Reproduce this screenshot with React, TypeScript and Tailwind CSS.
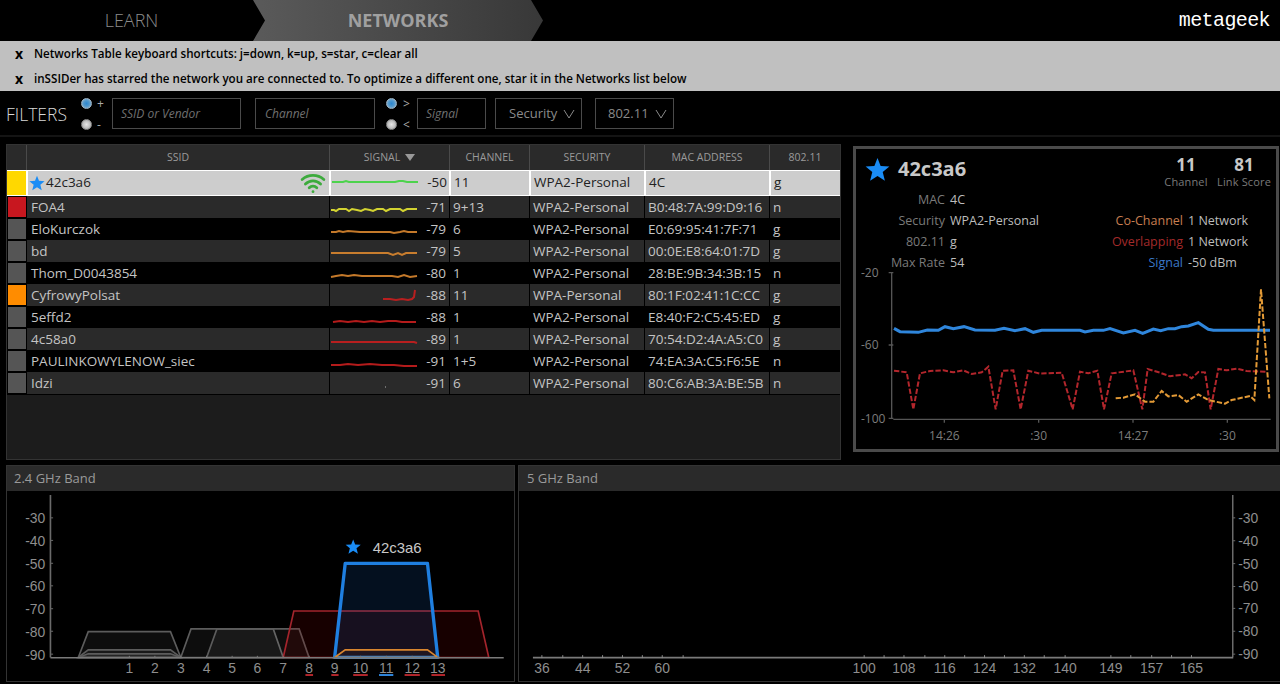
import React from "react";
import { Wifi } from "lucide-react";

const ui = "font-['Open_Sans','Noto_Sans',sans-serif]";

function Star({ size, className }: { size: number; className?: string }) {
  return (
    <svg width={size} height={size} viewBox="0 0 24 24" className={className}>
      <polygon points="12,1 15,8.6 23.4,9.2 17,14.5 19.1,22.8 12,18.2 4.9,22.8 7,14.5 0.6,9.2 9,8.6" fill="#1a8cf5" />
    </svg>
  );
}

function Radio({ on }: { on?: boolean }) {
  return (
    <span
      className={
        on
          ? "block w-[11px] h-[11px] shrink-0 rounded-full border border-[#9fb4c4] bg-[radial-gradient(circle,#2a86d0_0%,#4f97cc_45%,#a8bccb_100%)]"
          : "block w-[11px] h-[11px] shrink-0 rounded-full border border-[#8a8a8a] bg-[radial-gradient(circle,#e8e8e8_0%,#bdbdbd_60%,#8f8f8f_100%)]"
      }
    />
  );
}

function Chevron() {
  return (
    <svg width="12" height="10" viewBox="0 0 12 10" className="ml-[6px]">
      <polyline points="1,1 6,9 11,1" fill="none" stroke="#8a8a8a" strokeWidth="1" />
    </svg>
  );
}

const rows = [
  { color: "bg-[#c8171f]", ssid: "FOA4", sig: -71, ch: "9+13", sec: "WPA2-Personal", mac: "B0:48:7A:99:D9:16", std: "n", line: "#e6e632", pts: "1,14 4,14 6,15 9,13 16,13 19,15 22,13 27,14 31,15 35,13 40,14 43,15 47,13 53,13 56,15 60,13 70,13 73,15 77,13 87,13" },
  { color: "bg-[#555]", ssid: "EloKurczok", sig: -79, ch: "6", sec: "WPA2-Personal", mac: "E0:69:95:41:7F:71", std: "g", line: "#d9862f", pts: "1,14 6,14 9,13 13,14 18,13 30,14 60,14 64,15 70,14 74,13 78,14 87,14" },
  { color: "bg-[#555]", ssid: "bd", sig: -79, ch: "5", sec: "WPA2-Personal", mac: "00:0E:E8:64:01:7D", std: "g", line: "#d9862f", pts: "1,13 58,13 63,15 68,13 72,15 76,13 87,13" },
  { color: "bg-[#555]", ssid: "Thom_D0043854", sig: -80, ch: "1", sec: "WPA2-Personal", mac: "28:BE:9B:34:3B:15", std: "n", line: "#d9862f", pts: "1,15 6,14 12,13 18,14 24,13 32,14 62,14 68,15 74,13 80,15 87,14" },
  { color: "bg-[#ff8c00]", ssid: "CyfrowyPolsat", sig: -88, ch: "11", sec: "WPA-Personal", mac: "80:1F:02:41:1C:CC", std: "g", line: "#c81e1e", pts: "53,15 60,15 66,16 72,15 78,16 82,15 84,13 85,6" },
  { color: "bg-[#555]", ssid: "5effd2", sig: -88, ch: "1", sec: "WPA2-Personal", mac: "E8:40:F2:C5:45:ED", std: "g", line: "#c81e1e", pts: "3,16 10,15 18,16 26,15 34,16 42,15 50,16 58,15 66,15 72,16 86,16" },
  { color: "bg-[#555]", ssid: "4c58a0", sig: -89, ch: "1", sec: "WPA2-Personal", mac: "70:54:D2:4A:A5:C0", std: "g", line: "#c81e1e", pts: "1,14 84,14 87,15" },
  { color: "bg-[#555]", ssid: "PAULINKOWYLENOW_siec", sig: -91, ch: "1+5", sec: "WPA2-Personal", mac: "74:EA:3A:C5:F6:5E", std: "n", line: "#c81e1e", pts: "1,15 10,15 18,14 28,15 40,14 52,15 64,15 74,16 87,16" },
  { color: "bg-[#555]", ssid: "Idzi", sig: -91, ch: "6", sec: "WPA2-Personal", mac: "80:C6:AB:3A:BE:5B", std: "n", line: "#777", pts: "55,15 56,15" },
];

function Spark({ pts, color, w = 2 }: { pts: string; color: string; w?: number }) {
  return (
    <svg width="88" height="22" viewBox="0 0 88 22" className="shrink-0">
      <polyline points={pts} fill="none" stroke={color} strokeWidth={w} opacity="0.9" />
    </svg>
  );
}

function NetworksTable() {
  const head = "flex items-center justify-center border-l border-[#4a4a4a] text-[10.5px] text-[#9a9a9a]";
  const cell = "flex items-center border-l border-black pl-[3px] whitespace-nowrap overflow-hidden";
  const selCell = "flex items-center border-l-2 border-white pl-[3px] text-[#222]";
  return (
    <div className="w-[835px] h-[316px] border border-[#333] bg-[#1c1c1c] flex flex-col">
      <div className="flex h-[25px] bg-[#2a2a2a] shrink-0">
        <div className="w-[19px]" />
        <div className={`${head} w-[303px]`}>SSID</div>
        <div className={`${head} w-[120px] gap-[5px]`}>
          SIGNAL
          <svg width="10" height="7" viewBox="0 0 10 7"><polygon points="0,0 10,0 5,7" fill="#999" /></svg>
        </div>
        <div className={`${head} w-[80px]`}>CHANNEL</div>
        <div className={`${head} w-[115px]`}>SECURITY</div>
        <div className={`${head} w-[125px]`}>MAC ADDRESS</div>
        <div className={`${head} w-[71px]`}>802.11</div>
      </div>
      <div className="flex h-[26px] shrink-0 text-[13.5px] bg-[#cdcdcd] border-y border-white">
        <div className="w-[19px] bg-[#ffd800]" />
        <div className="w-[303px] flex items-center border-l-2 border-white text-[#222] pl-[1px] pb-[1px]">
          <Star size={16} />
          <span className="ml-[1px]">42c3a6</span>
          <Wifi size={26} strokeWidth={2.6} color="#3dab3d" className="ml-auto mr-[3px]" />
        </div>
        <div className="w-[120px] flex items-center border-l-2 border-white text-[#222] pb-[1px]">
          <Spark pts="1,10 12,10 15,9 18,10 64,10 68,9 72,9 76,10 87,10" color="#3fd43f" />
          <span className="ml-auto mr-[2px]">-50</span>
        </div>
        <div className={`${selCell} w-[80px] pb-[1px]`}>11</div>
        <div className={`${selCell} w-[115px] pb-[1px]`}>WPA2-Personal</div>
        <div className={`${selCell} w-[125px] pb-[1px]`}>4C</div>
        <div className={`${selCell} w-[71px] pb-[1px]`}>g</div>
      </div>
      {rows.map((r, i) => (
        <div key={r.ssid} className={`flex h-[22px] shrink-0 text-[13.5px] text-[#c4c4c4] ${i % 2 === 0 ? "bg-[#2a2a2a]" : "bg-black"}`}>
          <div className="w-[19px] flex items-center justify-center bg-black">
            <div className={`w-[18px] h-[20px] ${r.color}`} />
          </div>
          <div className={`${cell} w-[303px] pl-[4px]`}>{r.ssid}</div>
          <div className="w-[120px] flex items-center border-l border-black">
            <Spark pts={r.pts} color={r.line} />
            <span className="ml-auto mr-[3px]">{r.sig}</span>
          </div>
          <div className={`${cell} w-[80px]`}>{r.ch}</div>
          <div className={`${cell} w-[115px]`}>{r.sec}</div>
          <div className={`${cell} w-[125px]`}>{r.mac}</div>
          <div className={`${cell} w-[71px]`}>{r.std}</div>
        </div>
      ))}
      <div className="border-t border-black" />
    </div>
  );
}

function SignalChart() {
  const blue = "132,205 150,215 205,217 232,210 265,211 285,200 310,206 342,200 375,210 435,211 462,205 495,212 525,206 550,217 575,211 690,211 705,216 730,211 760,211 780,206 820,219 855,211 878,220 910,207 932,212 955,206 975,206 995,200 1015,198 1045,188 1075,208 1090,211 1260,211";
  const red = "132,332 170,337 190,448 210,340 240,333 280,331 310,337 340,331 365,342 395,337 415,320 437,448 458,332 490,331 512,448 535,332 570,341 635,338 668,448 690,335 715,340 742,332 762,448 785,340 850,331 877,448 893,327 930,338 960,349 1005,343 1025,355 1045,336 1065,337 1082,448 1105,327 1130,331 1160,326 1190,333 1250,335";
  const orange = "797,415 820,413 855,403 885,425 910,425 935,393 955,409 985,405 1010,425 1045,403 1075,420 1125,431 1145,420 1200,408 1213,420 1233,88 1258,415";
  const label = { fill: "#7c7c7c", fontSize: 36, fontFamily: "'Open Sans',sans-serif" };
  return (
    <svg width="420" height="189" viewBox="18 0 1260 567" className="block absolute left-0 bottom-0">
      <path d="M125 38V475M116 38H130M116 255H130M116 475H130M130 478H1262M283 478V488M566 478V488M849 478V488M1132 478V488" stroke="#555" strokeWidth="4" fill="none" />
      <polyline points={blue} fill="none" stroke="#2f86dc" strokeWidth="9" />
      <polyline points={red} fill="none" stroke="#b3262c" strokeWidth="6" strokeDasharray="16 6" />
      <polyline points={orange} fill="none" stroke="#e39a36" strokeWidth="6" strokeDasharray="16 6" />
      <text x="33" y="52" {...label}>-20</text>
      <text x="33" y="268" {...label}>-60</text>
      <text x="33" y="489" {...label}>-100</text>
      <text x="283" y="540" textAnchor="middle" {...label}>14:26</text>
      <text x="566" y="540" textAnchor="middle" {...label}>:30</text>
      <text x="849" y="540" textAnchor="middle" {...label}>14:27</text>
      <text x="1132" y="540" textAnchor="middle" {...label}>:30</text>
    </svg>
  );
}

function DetailPanel() {
  const lab = "text-right text-[#7a7a7a]";
  const val = "text-[#bdbdbd]";
  return (
    <div className="relative w-[426px] h-[306px] border-[3px] border-[#4a4a4a] bg-black">
      <div className="flex justify-between pl-[9px] pr-[5px] pt-[5px]">
        <div className="flex items-center h-[34px] -mt-[2px]">
          <Star size={25} />
          <span className="ml-[8px] text-[20px] font-bold text-[#c8c8c8]">42c3a6</span>
        </div>
        <div className="flex gap-[9px] text-center">
          <div className="flex flex-col w-[44px]">
            <span className="text-[17px] font-bold text-[#c8c8c8] leading-[21px]">11</span>
            <span className="text-[11px] tracking-[0.15px] text-[#7a7a7a] leading-[13px]">Channel</span>
          </div>
          <div className="flex flex-col w-[54px]">
            <span className="text-[17px] font-bold text-[#c8c8c8] leading-[21px]">81</span>
            <span className="text-[11px] tracking-[0.15px] text-[#7a7a7a] leading-[13px]">Link Score</span>
          </div>
        </div>
      </div>
      <div className="flex text-[12.5px] leading-[21px] mt-[1px]">
        <div className="grid grid-cols-[89px_auto] gap-x-[5px] w-[240px] self-start">
          <span className={lab}>MAC</span><span className={val}>4C</span>
          <span className={lab}>Security</span><span className={val}>WPA2-Personal</span>
          <span className={lab}>802.11</span><span className={val}>g</span>
          <span className={lab}>Max Rate</span><span className={val}>54</span>
        </div>
        <div className="grid grid-cols-[87px_auto] gap-x-[5px] self-start mt-[21px]">
          <span className="text-right text-[#c87e50]">Co-Channel</span><span className={val}>1 Network</span>
          <span className="text-right text-[#a32a2a]">Overlapping</span><span className={val}>1 Network</span>
          <span className="text-right text-[#3a78c8]">Signal</span><span className={val}>-50 dBm</span>
        </div>
      </div>
      <SignalChart />
    </div>
  );
}

function Band24() {
  const ylab = { fill: "#8e8e8e", fontSize: 42, fontFamily: "'Liberation Sans',sans-serif" };
  const ys = [[-30, 176], [-40, 244], [-50, 313], [-60, 381], [-70, 450], [-80, 518], [-90, 587]] as const;
  const chs = [386, 463, 541, 619, 696, 772, 850, 928, 1005, 1083, 1161, 1239, 1316];
  const under = [[917, 940, "#b3262c"], [995, 1017, "#b3262c"], [1061, 1105, "#b3262c"], [1139, 1182, "#2f86dc"], [1216, 1262, "#b3262c"], [1297, 1338, "#b3262c"]] as const;
  return (
    <svg width="508" height="191" viewBox="21 93 1524 573" className="block">
      <path d="M148 105V595" stroke="#6a6a6a" strokeWidth="5" />
      {ys.map(([, y]) => <path key={y} d={`M148 ${y - 2}H156`} stroke="#6a6a6a" strokeWidth="3" />)}
      {ys.map(([t, y]) => <text key={t} x="72" y={y + 15} {...ylab}>{t}</text>)}
      <polygon points="232,595 262,517 510,517 541,595" fill="rgba(255,255,255,0.05)" stroke="#5c5c5c" strokeWidth="5" />
      <polygon points="232,595 262,572 510,572 541,595" fill="rgba(255,255,255,0.05)" stroke="#5c5c5c" strokeWidth="5" />
      <polygon points="232,595 262,584 510,584 541,595" fill="rgba(255,255,255,0.05)" stroke="#5c5c5c" strokeWidth="5" />
      <polygon points="541,595 572,509 820,509 850,595" fill="rgba(255,255,255,0.05)" stroke="#5c5c5c" strokeWidth="5" />
      <polygon points="619,595 650,509 898,509 928,595" fill="rgba(255,255,255,0.05)" stroke="#5c5c5c" strokeWidth="5" />
      <polygon points="850,595 882,455 1438,455 1470,595" fill="rgba(130,0,0,0.18)" stroke="#a3242c" strokeWidth="5" />
      <polygon points="1005,595 1037,311 1285,311 1316,595" fill="rgba(30,110,220,0.14)" stroke="#1f7fe0" strokeWidth="10" strokeLinejoin="round" />
      <polygon points="1005,595 1037,572 1285,572 1316,595" fill="rgba(200,120,40,0.06)" stroke="#d9862f" strokeWidth="5" />
      <path d="M148 596H1515" stroke="#7a7a7a" strokeWidth="5" />
      {chs.map((x) => <path key={x} d={`M${x} 590V596`} stroke="#7a7a7a" strokeWidth="3" />)}
      {chs.map((x, i) => <text key={x} x={x} y="642" textAnchor="middle" fill="#8e8e8e" fontSize="42" fontFamily="'Liberation Sans',sans-serif">{i + 1}</text>)}
      {under.map(([a, b, c]) => <path key={a} d={`M${a} 648H${b}`} stroke={c} strokeWidth="6" />)}
      <polygon transform="translate(1037 237) scale(2)" points="12,1 15,8.6 23.4,9.2 17,14.5 19.1,22.8 12,18.2 4.9,22.8 7,14.5 0.6,9.2 9,8.6" fill="#1a8cf5" />
      <text x="1120" y="279" fill="#c8c8c8" fontSize="45" fontFamily="'Liberation Sans',sans-serif">42c3a6</text>
    </svg>
  );
}

function Band5() {
  const ys = [[-30, 518], [-40, 541], [-50, 564], [-60, 587], [-70, 609], [-80, 632], [-90, 655]] as const;
  const labs = [[36, 540], [44, 581], [52, 621], [60, 661], [100, 864], [108, 904], [116, 945], [124, 985], [132, 1025], [140, 1066], [149, 1112], [157, 1153], [165, 1193]] as const;
  const ticks = [540, 561, 581, 601, 621, 641, 661, 682, 864, 884, 904, 925, 945, 965, 985, 1005, 1025, 1045, 1066, 1112, 1132, 1153, 1173, 1193];
  const f = { fill: "#8e8e8e", fontSize: 14, fontFamily: "'Liberation Sans',sans-serif" };
  return (
    <svg width="761" height="191" viewBox="519 491 761 191" className="block">
      <path d="M1234.5 495V658" stroke="#6a6a6a" strokeWidth="1.5" />
      {ys.map(([t, y]) => <path key={t} d={`M1234 ${y}H1237`} stroke="#6a6a6a" strokeWidth="1" />)}
      {ys.map(([t, y]) => <text key={t} x="1240" y={y + 5} {...f}>{t}</text>)}
      <path d="M531 658.5H1235" stroke="#7a7a7a" strokeWidth="2" />
      {ticks.map((x) => <path key={x} d={`M${x} 656V659`} stroke="#8a8a8a" strokeWidth="1" />)}
      {labs.map(([t, x]) => <text key={t} x={x} y="674" textAnchor="middle" {...f}>{t}</text>)}
    </svg>
  );
}

export default function App() {
  return (
    <div className={`w-[1280px] h-[684px] overflow-hidden bg-black ${ui}`}>
      <div className="flex items-center h-[41px]">
        <div className="w-[253px] pl-[10px] text-center text-[18px] font-light text-[#8c8c8c]">LEARN</div>
        <div className="w-[290px] h-[41px] flex items-center justify-center text-[18px] font-bold text-[#a0a0a0] bg-[linear-gradient(90deg,#5a5a5a,#383838)] [clip-path:polygon(0_0,278px_0,100%_50%,278px_100%,0_100%,12px_50%)]">
          NETWORKS
        </div>
        <div className="ml-auto pr-[10px] text-[20px] tracking-[-0.6px] text-white font-['Liberation_Mono',monospace]">metageek</div>
      </div>

      <div className="h-[50px] bg-[#c0c0c0] text-black text-[11.62px] font-semibold">
        <div className="flex items-center h-[25px]">
          <span className="w-[34px] pl-[15px] text-[14px] font-bold">x</span>
          <span>Networks Table keyboard shortcuts: j=down, k=up, s=star, c=clear all</span>
        </div>
        <div className="flex items-center h-[25px]">
          <span className="w-[34px] pl-[15px] text-[14px] font-bold">x</span>
          <span>inSSIDer has starred the network you are connected to. To optimize a different one, star it in the Networks list below</span>
        </div>
      </div>

      <div className="flex items-center h-[46px] pt-[1px] border-b-2 border-[#141414] text-[#8a8a8a]">
        <span className="ml-[6px] w-[75px] text-[17.5px] font-light text-[#d8d8d8] pt-[1px]">FILTERS</span>
        <div className="flex flex-col gap-[10px] w-[31px] text-[12px] leading-[11px] text-[#aaa]">
          <div className="flex items-center gap-[5px]"><Radio on />+</div>
          <div className="flex items-center gap-[5px]"><Radio />-</div>
        </div>
        <div className="w-[129px] h-[31px] border border-[#4a4a4a] flex items-center pl-[8px] pt-[1px] text-[12px] italic text-[#707070]">SSID or Vendor</div>
        <div className="ml-[14px] w-[120px] h-[31px] border border-[#4a4a4a] flex items-center pl-[9px] pt-[1px] text-[12px] italic text-[#707070]">Channel</div>
        <div className="ml-[11px] flex flex-col gap-[10px] w-[31px] text-[12px] leading-[11px] text-[#aaa]">
          <div className="flex items-center gap-[6px]"><Radio on />&gt;</div>
          <div className="flex items-center gap-[6px]"><Radio />&lt;</div>
        </div>
        <div className="w-[69px] h-[31px] border border-[#4a4a4a] flex items-center pl-[8px] pt-[1px] text-[12px] italic text-[#707070]">Signal</div>
        <div className="ml-[9px] w-[87px] h-[31px] border border-[#4a4a4a] flex items-center pl-[13px] pt-[1px] text-[13px]">Security<Chevron /></div>
        <div className="ml-[13px] w-[79px] h-[31px] border border-[#4a4a4a] flex items-center pl-[12px] pt-[1px] text-[13px]">802.11<Chevron /></div>
      </div>

      <div className="flex items-start pt-[7px] pl-[6px] h-[328px]">
        <NetworksTable />
        <div className="ml-[12px] mt-[2px]"><DetailPanel /></div>
      </div>

      <div className="flex pl-[6px] gap-[3px] text-[13px] text-[#9a9a9a]">
        <div className="w-[509px] h-[217px] border border-[#333] flex flex-col">
          <div className="h-[25px] bg-[#2a2a2a] flex items-center pl-[7px] shrink-0">2.4 GHz Band</div>
          <Band24 />
        </div>
        <div className="w-[762px] h-[217px] border border-[#333] border-r-0 flex flex-col">
          <div className="h-[25px] bg-[#2a2a2a] flex items-center pl-[8px] shrink-0">5 GHz Band</div>
          <Band5 />
        </div>
      </div>
    </div>
  );
}
